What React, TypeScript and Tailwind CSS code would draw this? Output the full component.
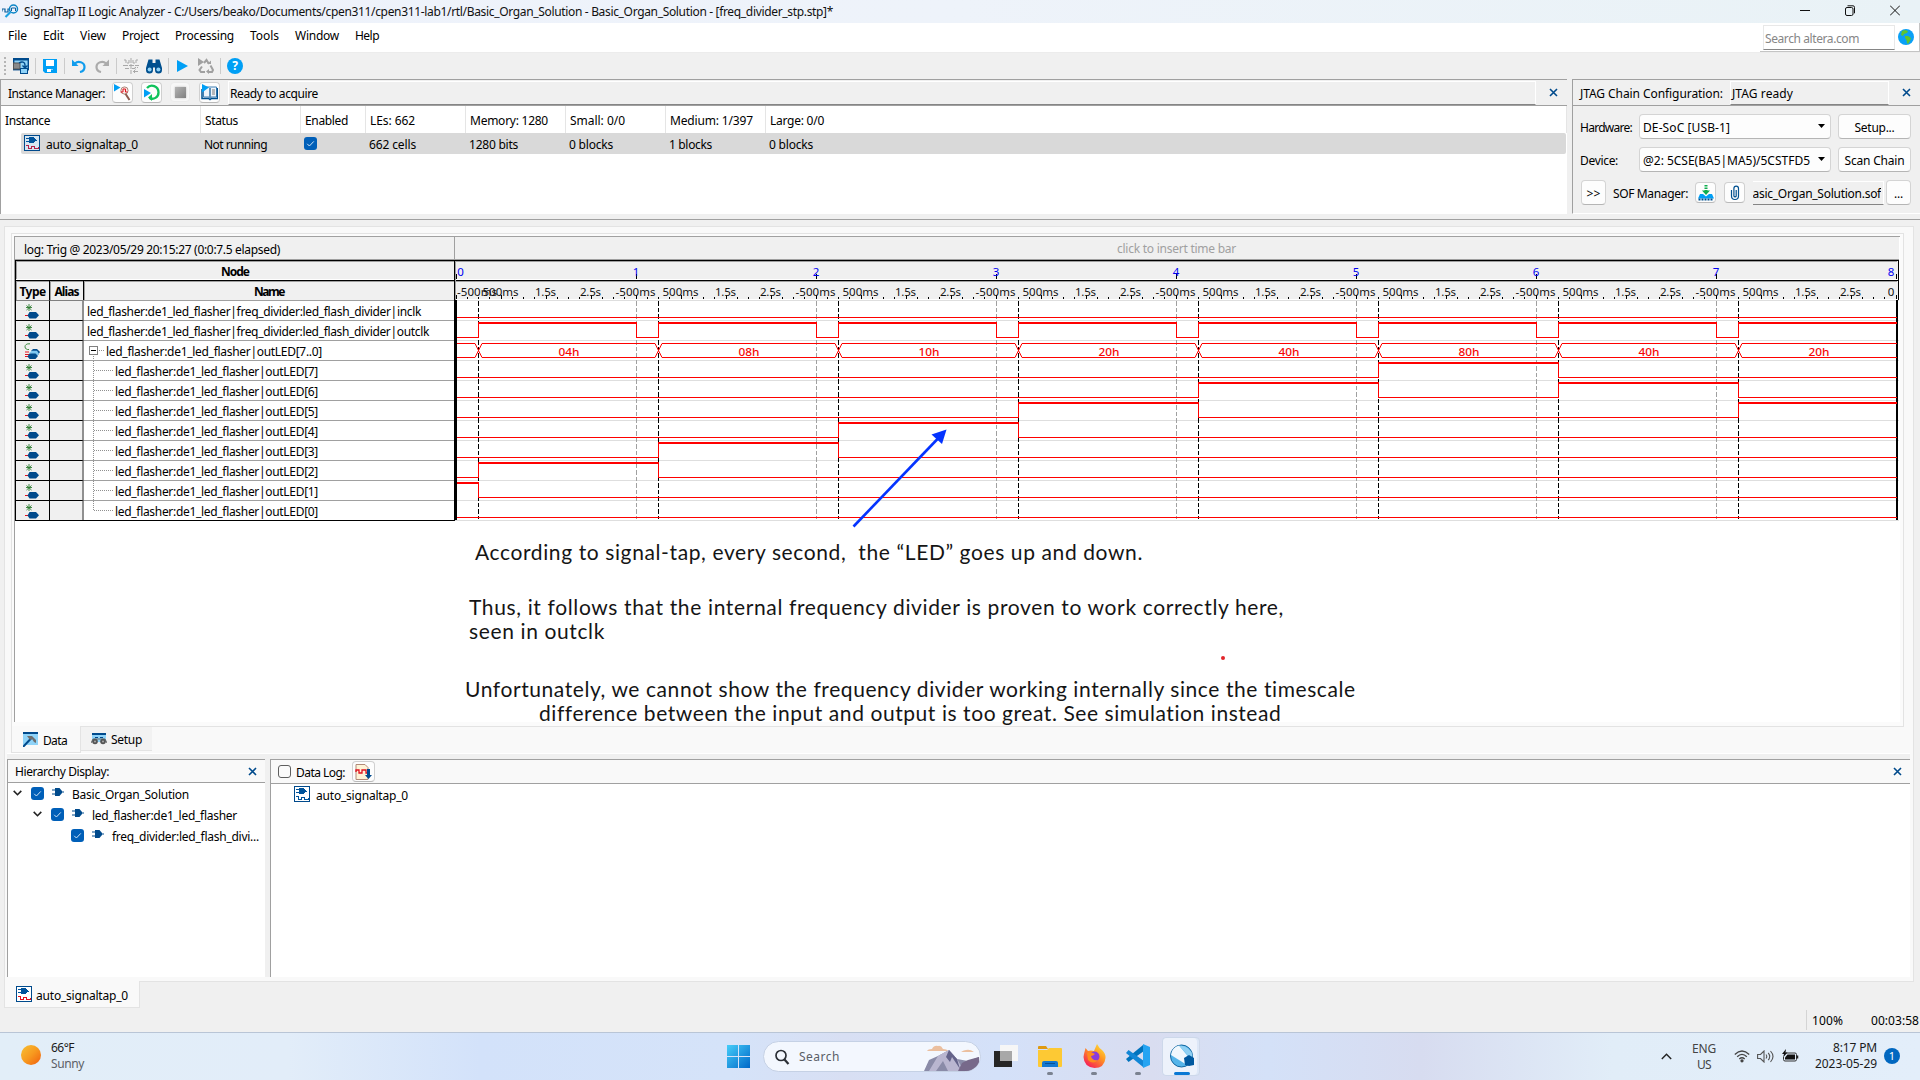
import React, { useLayoutEffect, useRef } from "react";

/* One line of text whose tracking is adjusted so that it spans `w` pixels. */
function T({ w, c = "", children }: { w: number; c?: string; children: string }) {
  const ref = useRef<HTMLSpanElement>(null);
  useLayoutEffect(() => {
    const el = ref.current;
    if (!el) return;
    el.style.letterSpacing = "0px";
    const natural = el.getBoundingClientRect().width;
    const gap = (w - natural) / Math.max(1, children.length);
    el.style.letterSpacing = `${gap}px`;
  }, [w, children]);
  return (
    <span ref={ref} className={`inline-block shrink-0 whitespace-pre ${c}`}>
      {children}
    </span>
  );
}

/* ---------- small icons ---------- */

const CloseX = ({ c = "" }: { c?: string }) => (
  <svg className={`h-[9px] w-[9px] shrink-0 ${c}`} viewBox="0 0 9 9">
    <path d="M1 1L8 8M8 1L1 8" stroke="#004a8c" strokeWidth="1.6" />
  </svg>
);

const Check = ({ c = "" }: { c?: string }) => (
  <span className={`flex h-[13px] w-[13px] shrink-0 items-center justify-center rounded-[3px] bg-[#005fb8] ${c}`}>
    <svg className="h-[9px] w-[9px]" viewBox="0 0 9 9" fill="none">
      <path d="M1.2 4.8L3.4 7L7.8 2.4" stroke="#cfe4f7" strokeWidth="1" />
    </svg>
  </span>
);

const TapIcon = ({ red = "#e1121f", c = "", bg = "#fff" }: { red?: string; c?: string; bg?: string }) => (
  <svg className={`h-4 w-4 shrink-0 ${c}`} viewBox="0 0 16 16" shapeRendering="crispEdges">
    <rect x=".5" y=".5" width="15" height="15" fill={bg} stroke="#004a8c" />
    <path d="M5 2h4l2.500 2v2L9 8H5z" fill="#00539b" />
    <path d="M2 3.500h3M2 6.500h3M11 5.500h2" stroke="#00539b" />
    <path d="M2 10.500h2.500v3h3v-2h3v2h3.500v-2" fill="none" stroke={red} />
  </svg>
);

const Plug = ({ c = "" }: { c?: string }) => (
  <svg className={`h-2 w-3 shrink-0 ${c}`} viewBox="0 0 12 8">
    <path d="M3 0h4.500L10 3v2L7.500 8H3z" fill="#004a8c" />
    <path d="M0 2h3M0 6h3M10 4h2" stroke="#004a8c" strokeWidth="1.200" />
  </svg>
);

const Chevron = ({ c = "" }: { c?: string }) => (
  <svg className={`h-[6px] w-[9px] shrink-0 ${c}`} viewBox="0 0 9 6" fill="none">
    <path d="M.7.9L4.500 4.700L8.300.9" stroke="#222" strokeWidth="1.600" />
  </svg>
);

const NodeIcon = () => (
  <svg className="h-[17px] w-4" viewBox="0 0 16 17">
    <path d="M5 1v7M2.500 2.500l5 4.500M7.500 2.500L2.500 7M2 4.500h6" stroke="#2e7d32" strokeWidth=".9" />
    <path d="M1 12.500h3" stroke="#e1121f" />
    <path d="M5.500 9h6.500l3 3.200l-3 3.300H5.500L3.500 12.500z" fill="#004a8c" />
  </svg>
);

const BusIcon = () => (
  <svg className="h-[17px] w-4" viewBox="0 0 16 17">
    <path d="M6 .8C2.500.5 1 2 1 3.800S3 7 5 6.500" fill="none" stroke="#3c8a40" />
    <path d="M1 9h4M1 11.500h4M1 13.500h4" stroke="#e1121f" />
    <path d="M7 8l2-2h4l3 3-2 3z" fill="#004a8c" />
    <path d="M5 10l3-2.200h5l2 3-2 2z" fill="#7fc8f2" />
    <path d="M5.500 10.500h6l2.500 2.500-2.500 3h-6l-2-2.500z" fill="#004a8c" />
  </svg>
);

const Btn = ({ c = "", children }: { c?: string; children?: React.ReactNode }) => (
  <span className={`flex h-[21px] w-[21px] shrink-0 items-center justify-center rounded-[4px] border border-[#d0d0d0] border-b-[#b9b9b9] bg-[#fdfdfd] ${c}`}>
    {children}
  </span>
);

const Sep = () => <span className="h-4 w-px shrink-0 bg-[#cbcbcb]" />;

/* ---------- title, menu, toolbar ---------- */

function TitleBar() {
  return (
    <div className="flex h-[23px] items-start bg-linear-to-r from-[#eef2fb] via-[#eef3fa] to-[#e9f2f6]">
      <svg className="ml-[2px] mt-[3px] h-4 w-[17px]" viewBox="0 0 17 16" fill="none">
        <path d="M0 8.500V6h3v3h3V6h2" stroke="#0b5f9e" strokeWidth="1.200" />
        <circle cx="11.500" cy="6" r="4" stroke="#0a84c6" strokeWidth="1.500" />
        <path d="M9.500 8V5h4v3" stroke="#0b5f9e" />
        <path d="M8.500 9L3.500 14" stroke="#1ba1e2" strokeWidth="2.200" />
      </svg>
      <T w={809} c="ml-[5px] mt-[3px] text-[#111]">
        SignalTap II Logic Analyzer - C:/Users/beako/Documents/cpen311/cpen311-lab1/rtl/Basic_Organ_Solution - Basic_Organ_Solution - [freq_divider_stp.stp]*
      </T>
      <div className="ml-auto mr-[20px] flex items-center gap-[35px] pt-[5px]">
        <svg className="h-[11px] w-[10px]" viewBox="0 0 10 11"><path d="M0 5.500h10" stroke="#111" /></svg>
        <svg className="h-[11px] w-[10px]" viewBox="0 0 10 11" fill="none" stroke="#111">
          <rect x=".5" y="2.500" width="7.500" height="8" rx="1.500" />
          <path d="M2.500.8h5.500a1.500 1.500 0 0 1 1.500 1.500v6" />
        </svg>
        <svg className="h-[11px] w-[10px]" viewBox="0 0 10 11"><path d="M0 .5l10 10M10 .5l-10 10" stroke="#111" /></svg>
      </div>
    </div>
  );
}

function MenuBar() {
  const items: [string, number][] = [
    ["File", 19], ["Edit", 21], ["View", 26], ["Project", 37], ["Processing", 59], ["Tools", 29], ["Window", 44], ["Help", 24],
  ];
  return (
    <div className="flex h-[30px] border-b border-[#ececec] bg-white">
      <div className="flex gap-4 pl-2 pt-1">
        {items.map(([t, w]) => <T key={t} w={w}>{t}</T>)}
      </div>
      <div className="ml-auto flex h-[29px] w-[160px] border-b border-r border-[#c4c4c4] pl-[3px] pt-[2px]">
        <div className="flex h-[25px] w-[132px] border border-[#e8e8e8] border-b-[#858585] pl-px pt-1 text-[#868686]">
          <T w={94}>Search altera.com</T>
        </div>
        <svg className="ml-[3px] mt-[4px] h-4 w-4" viewBox="0 0 16 16">
          <circle cx="8" cy="8" r="8" fill="#0aa0f5" />
          <path d="M4 2l3-1 3 1-1 2-3 1-1 2-2-1zM7 7l3 0 3 2-1 3-2 3-1-1-.500-3L7 9z" fill="#5fc42e" />
        </svg>
      </div>
    </div>
  );
}

function Toolbar() {
  return (
    <div className="flex h-[26px] items-center bg-[#f0f0f0] pl-1">
      <span className="h-[19px] w-[2px] bg-[repeating-linear-gradient(#b5b5b5_0_2px,transparent_2px_4px)]" />
      <svg className="ml-[7px] mr-[6px] h-4 w-4" viewBox="0 0 16 16">
        <rect x=".7" y=".7" width="14.600" height="11" fill="#8fd3f8" stroke="#004a8c" strokeWidth="1.400" />
        <path d="M0 1.500h16" stroke="#004a8c" strokeWidth="2" />
        <rect x=".5" y="5" width="6.500" height="6" fill="#8a8a8a" stroke="#555" />
        <path d="M6 5c3-2 6-1 6 2v2M9.500 7.500L12 10l2.500-2.500" fill="none" stroke="#004a8c" strokeWidth="1.400" />
        <rect x="7.500" y="10.500" width="7" height="5" fill="#8fd3f8" stroke="#004a8c" />
      </svg>
      <Sep />
      <svg className="ml-[7px] mr-[7px] h-[14px] w-[14px]" viewBox="0 0 14 14">
        <path d="M0 0h14v14H2L0 12z" fill="#009ff5" />
        <path d="M3 1h8v6H3zM4 10h6v3H4z" fill="#fff" />
        <path d="M8 10.500h2V13H8z" fill="#009ff5" />
      </svg>
      <Sep />
      <svg className="ml-[7px] h-[14px] w-[14px]" viewBox="0 0 14 14" fill="none">
        <path d="M3 4.500C6 1.500 12.500 3 12.500 8c0 2.500-2 4.500-4.500 5" stroke="#109ced" strokeWidth="2.200" />
        <path d="M0 .5V7h6.500z" fill="#109ced" />
      </svg>
      <svg className="ml-[9px] mr-[7px] h-[14px] w-[14px]" viewBox="0 0 14 14" fill="none">
        <path d="M11 4.500C8 1.500 1.500 3 1.500 8c0 2.500 2 4.500 4.500 5" stroke="#ababab" strokeWidth="2.200" />
        <path d="M14 .5V7H7.500z" fill="#ababab" />
      </svg>
      <Sep />
      <svg className="ml-[6px] h-4 w-4" viewBox="0 0 16 16" fill="none" stroke="#a9a9a9">
        <path d="M8 0v16M1 2h2v3h3V2M15 2h-2v3h-3V2M0 7.500h16M2 10.500h4M9 10.500h3v-1h3M10 13.500h6M12.500 11.500L10.500 13.500l2 2" strokeDasharray="5 1" />
      </svg>
      <svg className="ml-[7px] mr-[6px] h-4 w-4" viewBox="0 0 16 16">
        <path d="M2.500 1.500h4V5h3V1.500h4L16 10v2a3.500 3.500 0 0 1-7 0V9.500H7V12a3.500 3.500 0 0 1-7 0v-2z" fill="#00508f" />
        <circle cx="3.600" cy="11.500" r="2" fill="#8fd3f8" /><circle cx="12.400" cy="11.500" r="2" fill="#8fd3f8" />
      </svg>
      <Sep />
      <svg className="ml-[8px] h-3 w-[11px]" viewBox="0 0 11 12"><path d="M0 0l11 6L0 12z" fill="#009ff5" /></svg>
      <svg className="ml-[10px] mr-[6px] h-4 w-4" viewBox="0 0 16 16" fill="none" stroke="#a0a0a0" strokeWidth="2">
        <path d="M0 0l6 4-6 4z" fill="#a0a0a0" stroke="none" />
        <path d="M6 5l2.500-3L11 6M12.500 7.500L15 12l-1 2h-4M7 14H3l-1.500-2L4 8.500" />
        <path d="M11 11v5l-3-2.500zM9 6h4V2.500z" fill="#a0a0a0" stroke="none" />
      </svg>
      <Sep />
      <span className="ml-[6px] flex h-4 w-4 items-center justify-center rounded-full bg-[#009ff5] text-[12px] font-bold leading-4 text-white">?</span>
    </div>
  );
}

/* ---------- instance manager ---------- */

const columns: { head: string; hw: number; val: string; vw: number; cell: string }[] = [
  { head: "LEs: 662", hw: 45, val: "662 cells", vw: 47, cell: "w-[100px]" },
  { head: "Memory: 1280", hw: 78, val: "1280 bits", vw: 49, cell: "w-[100px]" },
  { head: "Small: 0/0", hw: 55, val: "0 blocks", vw: 44, cell: "w-[100px]" },
  { head: "Medium: 1/397", hw: 83, val: "1 blocks", vw: 43, cell: "w-[100px]" },
  { head: "Large: 0/0", hw: 54, val: "0 blocks", vw: 44, cell: "w-[801px]" },
];

function InstanceManager() {
  return (
    <section className="flex h-[135px] w-[1567px] flex-col border-l border-t border-[#a0a0a0] bg-white">
      <div className="flex h-[26px] border-b border-[#a0a0a0] bg-[#f0f0f0] pl-[7px]">
        <T w={97} c="mt-[5px]">Instance Manager:</T>
        <Btn c="ml-[7px] mt-[2px]">
          <svg className="h-[17px] w-[17px]" viewBox="0 0 17 17">
            <path d="M11 9l4.500 7" stroke="#8d5a4c" strokeWidth="2" />
            <circle cx="10.500" cy="6.500" r="3.600" fill="#fbe9e4" stroke="#9a6a5c" strokeWidth=".8" />
            <path d="M6.500 8h2.500V5h2.500v3h2" stroke="#e1121f" strokeWidth="1" fill="none" />
            <path d="M0 0l6.500 3.500L0 7.500z" fill="#009ff5" />
          </svg>
        </Btn>
        <Btn c="ml-[8px] mt-[2px]">
          <svg className="h-[17px] w-[17px]" viewBox="0 0 17 17" fill="none">
            <path d="M4 4C8-.5 15.500 2 15.500 8.500c0 5-5 7.500-9 5.500" stroke="#0fc25c" strokeWidth="2.300" />
            <path d="M9 10v7l-4-3.500z" fill="#0fc25c" />
            <path d="M1 5l7 4-7 4.500z" fill="#009ff5" />
          </svg>
        </Btn>
        <span className="ml-[8px] mt-[2px] flex h-[20px] w-[20px] items-center justify-center rounded-[4px] border border-[#ebebeb] bg-[#f7f7f7]">
          <span className="h-[11px] w-[11px] bg-linear-to-br from-[#b4b4b4] to-[#808080] shadow-[0_0_2px_#bbb]" />
        </span>
        <Btn c="ml-[9px] mt-[2px]">
          <svg className="h-[17px] w-[17px]" viewBox="0 0 17 17">
            <path d="M2.500 3h13v10H10l-1 1.500L8 13H2.500z" fill="#eef4fa" stroke="#3f7fb3" />
            <path d="M9 4v9" stroke="#00508f" strokeWidth="1.200" />
            <path d="M11 6h3M11 8h3M11 10h3" stroke="#6e6e6e" strokeWidth=".9" />
            <path d="M1 5v9.500h6.500l1.500 1 1.500-1H16.500V4" fill="none" stroke="#00508f" strokeWidth="1.500" />
            <path d="M1 0l7 3.500L1 8.500z" fill="#009ff5" />
          </svg>
        </Btn>
        <div className="ml-[8px] mt-px flex h-[24px] w-[1308px] border border-white border-b-[#858585] bg-[#f0f0f0] pl-px pt-[3px]">
          <T w={88}>Ready to acquire</T>
        </div>
        <CloseX c="ml-[13px] mt-[8px]" />
      </div>
      <div className="flex h-[27px]">
        <div className="w-[200px] border-r border-[#e5e5e5] pl-1 pt-[6px]"><T w={45}>Instance</T></div>
        <div className="w-[100px] border-r border-[#e5e5e5] pl-1 pt-[6px]"><T w={33}>Status</T></div>
        <div className="w-[65px] border-r border-[#e5e5e5] pl-1 pt-[6px]"><T w={43}>Enabled</T></div>
        {columns.map((k) => (
          <div key={k.head} className={`border-r border-[#e5e5e5] pl-1 pt-[6px] ${k.cell}`}><T w={k.hw}>{k.head}</T></div>
        ))}
      </div>
      <div className="ml-5 flex h-[21px] w-[1545px] rounded-[2px] bg-[#d9d9d9]">
        <div className="flex w-[179px] pl-[3px] pt-[2px]">
          <TapIcon red="#b3224a" bg="#d6e6f2" />
          <T w={92} c="ml-[6px] mt-px">auto_signaltap_0</T>
        </div>
        <div className="w-[100px] pl-1 pt-[3px]"><T w={63}>Not running</T></div>
        <div className="w-[65px] pl-1 pt-[4px]"><Check /></div>
        {columns.map((k) => (
          <div key={k.head} className="w-[100px] pl-1 pt-[3px]"><T w={k.vw}>{k.val}</T></div>
        ))}
      </div>
    </section>
  );
}

/* ---------- JTAG panel ---------- */

const Select = ({ w, children }: { w: number; children: string }) => (
  <div className="flex h-[25px] w-[192px] rounded-[4px] border border-[#d4d4d4] border-b-[#b5b5b5] bg-[#fdfdfd] pl-[3px] pt-1">
    <T w={w}>{children}</T>
    <svg className="ml-auto mr-[5px] mt-[5px] h-1 w-[7px]" viewBox="0 0 7 4"><path d="M0 0h7L3.500 4z" fill="#000" /></svg>
  </div>
);

const Push = ({ w, c, children }: { w: number; c: string; children: string }) => (
  <div className={`flex h-[25px] justify-center rounded-[4px] border border-[#d4d4d4] border-b-[#b5b5b5] bg-[#fdfdfd] pt-1 ${c}`}>
    <T w={w}>{children}</T>
  </div>
);

function JtagPanel() {
  return (
    <section className="ml-[5px] flex h-[135px] w-[348px] flex-col border-b border-l border-t border-[#a0a0a0] border-b-white bg-[#f0f0f0]">
      <div className="flex h-[26px] shrink-0 border-b border-[#a0a0a0] pl-[7px]">
        <T w={143} c="mt-[5px]">JTAG Chain Configuration:</T>
        <div className="ml-[7px] mt-px flex h-[24px] w-[159px] border border-white border-b-[#858585] pl-px pt-[3px]">
          <T w={61}>JTAG ready</T>
        </div>
        <CloseX c="ml-[13px] mt-[8px]" />
      </div>
      <div className="mt-[8px] flex pl-[7px]">
        <div className="w-[59px] pt-[5px]"><T w={52}>Hardware:</T></div>
        <Select w={87}>DE-SoC [USB-1]</Select>
        <Push c="ml-[7px] w-[73px]" w={40}>Setup...</Push>
      </div>
      <div className="mt-[8px] flex pl-[7px]">
        <div className="w-[59px] pt-[5px]"><T w={38}>Device:</T></div>
        <Select w={167}>@2: 5CSE(BA5|MA5)/5CSTFD5</Select>
        <Push c="ml-[7px] w-[73px]" w={60}>Scan Chain</Push>
      </div>
      <div className="mt-[8px] flex pl-[8px]">
        <Push c="w-[25px]" w={14}>{">>"}</Push>
        <T w={75} c="ml-[7px] mt-[5px]">SOF Manager:</T>
        <Btn c="ml-[7px] mt-[2px]">
          <svg className="h-4 w-4" viewBox="0 0 16 16">
            <path d="M8 0v7" stroke="#0fae4e" strokeWidth="3" strokeDasharray="1.500 1" />
            <path d="M4 5.500h8L8 10z" fill="#0fae4e" />
            <path d="M2 9h3l3 2.500L11 9h3l2 4.500H0z" fill="#009ff5" />
            <path d="M.5 14.500h15" stroke="#00508f" strokeWidth="2" strokeDasharray="2 1" />
          </svg>
        </Btn>
        <Btn c="ml-[8px] mt-[2px]">
          <svg className="h-4 w-4" viewBox="0 0 16 16" fill="none" stroke="#00508f" strokeWidth="1.200">
            <path d="M4.500 5v6a3.500 3.500 0 0 0 7 0V3.500a2.300 2.300 0 0 0-4.600 0V11a1.200 1.200 0 0 0 2.300 0V5" />
          </svg>
        </Btn>
        <div className="ml-[8px] mt-px flex h-[24px] w-[131px] overflow-hidden border border-l-0 border-white border-b-[#858585] pt-[3px]">
          <div className="flex w-[128px] justify-end overflow-hidden"><T w={136}>Basic_Organ_Solution.sof</T></div>
        </div>
        <Push c="ml-[2px] w-[25px]" w={9}>...</Push>
      </div>
    </section>
  );
}

/* ---------- waveform data ---------- */

const X0 = 457;
const X1 = 1897;
const edges = [478, 658, 838, 1018, 1198, 1378, 1558, 1738];

/* Each signal lists the spans in which it is high. */
const signals: { row: number; high: [number, number][] }[] = [
  { row: 0, high: [] },
  { row: 1, high: edges.map((e, i) => [e, i === 7 ? X1 : e + 158] as [number, number]) },
  { row: 3, high: [[1378, 1558]] },
  { row: 4, high: [[1198, 1378], [1558, 1738]] },
  { row: 5, high: [[1018, 1198], [1738, X1]] },
  { row: 6, high: [[838, 1018]] },
  { row: 7, high: [[658, 838]] },
  { row: 8, high: [[478, 658]] },
  { row: 9, high: [[X0, 478]] },
  { row: 10, high: [] },
];

const busLabels: [string, number][] = [
  ["04h", 569], ["08h", 749], ["10h", 929], ["20h", 1109], ["40h", 1289], ["80h", 1469], ["40h", 1649], ["20h", 1819],
];

function Signal({ row, high }: { row: number; high: [number, number][] }) {
  const top = 302 + row * 20;
  const low = 317 + row * 20;
  const lows: [number, number][] = [];
  let x = X0;
  high.forEach(([a, b]) => {
    if (a > x) lows.push([x, a]);
    x = b;
  });
  if (x < X1) lows.push([x, X1]);
  return (
    <g fill="#f00">
      {lows.map(([a, b]) => <rect key={a} x={a} y={low} width={b - a} height="1" />)}
      {high.map(([a, b]) => (
        <g key={a}>
          <rect x={a} y={top} width={b - a} height="2" />
          {a > X0 && <rect x={a} y={top} width="1" height="16" />}
          {b < X1 && <rect x={b} y={top} width="1" height="16" />}
        </g>
      ))}
    </g>
  );
}

function Waveform() {
  const minor = Array.from({ length: 129 }, (_, i) => ({ i, x: Math.floor(456 + i * 11.25) }));
  const times: [string, number, number][] = [];
  for (let k = 0; k < 8; k++) {
    const b = 456 + k * 180;
    times.push(["500ms", b + 45, 36], ["1.5s", b + 90, 21], ["2.5s", b + 135, 21]);
    if (k > 0) times.push(["-500ms", b, 40]);
  }
  return (
    <svg className="h-[261px] w-[1444px] shrink-0" viewBox="455 260 1444 261" shapeRendering="crispEdges">
      <rect x="455" y="260" width="1443" height="40" fill="#f0f0f0" />
      <path d="M454 260.500h1444.500v40M454 280.500h1444" stroke="#000" fill="none" />
      <path d="M456 261.500h1441M456 281.500h1441" stroke="#a0a0a0" />
      <path d="M455 279.500h1443M455 299.500h1443" stroke="#fff" />
      <rect x="455" y="261" width="1" height="39" fill="#a0a0a0" />
      {Array.from({ length: 12 }, (_, i) => (
        <rect key={i} x="455" y={300 + i * 20} width="1444" height="1" fill="#dedede" />
      ))}
      <rect x="455" y="300" width="2" height="220" fill="#000" />
      <rect x="1896" y="300" width="2" height="220" fill="#000" />
      {edges.slice(0, 7).map((e) => (
        <path key={e} d={`M${e + 158.5} 301V519`} stroke="#a0a0a0" strokeDasharray="4.500 2" />
      ))}
      {edges.map((e) => (
        <path key={e} d={`M${e + 0.5} 301V519`} stroke="#000" strokeDasharray="4.500 2" />
      ))}
      {signals.map((s) => <Signal key={s.row} {...s} />)}
      {[X0 - 3, ...edges].map((e, i) => (
        <path
          key={e}
          d={`M${i ? e + 4 : X0} 343.500H${i === 8 ? X1 : (edges[i] ?? X1) - 3}M${i ? e + 4 : X0} 357.500H${i === 8 ? X1 : (edges[i] ?? X1) - 3}`}
          stroke="#f00"
        />
      ))}
      {edges.map((e) => (
        <path key={e} shapeRendering="auto" d={`M${e - 3} 343.500L${e + 4} 357.500M${e + 4} 343.500L${e - 3} 357.500`} stroke="#f00" />
      ))}
      {minor.map(({ i, x }) => (
        <rect key={i} x={x} y={i % 4 === 0 ? 295 : 297} width="1" height={i % 4 === 0 ? 4 : 2} fill="#000" />
      ))}
      {Array.from({ length: 9 }, (_, i) => (
        <rect key={i} x={456 + i * 180} y="274" width="1" height="5" fill="#000" />
      ))}
      <g fontSize="11.500" textAnchor="middle" fill="#0000f0">
        {[1, 2, 3, 4, 5, 6, 7].map((n) => <text key={n} x={456 + n * 180} y="275.500">{n}</text>)}
        <text x="460.500" y="275.500">0</text>
        <text x="1891" y="275.500">8</text>
      </g>
      <g fontSize="11.500" textAnchor="middle" fill="#111">
        {times.map(([t, x, w]) => <text key={t + x} x={x - 0.5} y="295.500" textLength={w}>{t}</text>)}
        <text x="477" y="295.500" textLength="40">-500ms</text>
        <text x="1891" y="295.500">0</text>
      </g>
      <g fontSize="10.500" fontWeight="500" textAnchor="middle" fill="#f40808">
        {busLabels.map(([t, x]) => <text key={x} x={x} y="356" textLength="21" lengthAdjust="spacingAndGlyphs">{t}</text>)}
      </g>
    </svg>
  );
}

/* ---------- node table ---------- */

const P = "led_flasher:de1_led_flasher|";
const nodes: { text: string; w: number; kind: "leaf" | "bus" | "child" }[] = [
  { text: P + "freq_divider:led_flash_divider|inclk", w: 334, kind: "leaf" },
  { text: P + "freq_divider:led_flash_divider|outclk", w: 342, kind: "leaf" },
  { text: P + "outLED[7..0]", w: 216, kind: "bus" },
  ...[7, 6, 5, 4, 3, 2, 1, 0].map((n) => ({ text: `${P}outLED[${n}]`, w: 203, kind: "child" as const })),
];

function NodeTable() {
  return (
    <div className="flex w-[440px] shrink-0 flex-col border-l border-r border-black">
      <div className="flex h-5 justify-center border-b border-t border-b-white border-t-black bg-[#f0f0f0] font-bold shadow-[inset_1px_1px_0_#a0a0a0]">
        <T w={28} c="mt-[2px]">Node</T>
      </div>
      <div className="flex h-5 border-t border-black bg-[#f0f0f0] font-bold">
        <div className="flex w-[34px] justify-center border-r border-black shadow-[inset_1px_1px_0_#a0a0a0]"><T w={26} c="mt-[2px]">Type</T></div>
        <div className="flex w-[34px] justify-center border-r border-black shadow-[inset_1px_1px_0_#a0a0a0]"><T w={24} c="mt-[2px]">Alias</T></div>
        <div className="flex flex-1 justify-center shadow-[inset_1px_1px_0_#a0a0a0]"><T w={30} c="mt-[2px]">Name</T></div>
      </div>
      {nodes.map((n, i) => (
        <div key={n.text} className="flex h-5">
          <div className={`h-5 w-[34px] border-r border-t border-r-black bg-[#f0f0f0] pl-[8px] pt-[2px] ${i ? "border-t-black" : "border-t-[#808080]"}`}>
            {n.kind === "bus" ? <BusIcon /> : <NodeIcon />}
          </div>
          <div className={`h-5 w-[34px] border-r-2 border-t border-r-[#909090] bg-[#f0f0f0] ${i ? "border-t-black" : "border-t-[#808080]"}`} />
          <div className="flex h-5 flex-1 border-t border-[#a0a0a0] bg-white">
            {n.kind === "leaf" && <T w={n.w} c="ml-[3px] mt-[2px]">{n.text}</T>}
            {n.kind === "bus" && (
              <>
                <svg className="ml-[5px] mt-[5px] h-[14px] w-[17px] shrink-0" viewBox="0 0 17 14" shapeRendering="crispEdges" fill="none">
                  <rect x=".5" y=".5" width="8" height="8" stroke="#808080" />
                  <path d="M2 4.500h5" stroke="#000" />
                  <path d="M10 4.500h5M4.500 10v4" stroke="#909090" strokeDasharray="1 1" />
                </svg>
                <T w={n.w} c="mt-[2px]">{n.text}</T>
              </>
            )}
            {n.kind === "child" && (
              <>
                <svg className="ml-[9px] h-[19px] w-[22px] shrink-0" viewBox="0 0 22 19" shapeRendering="crispEdges" fill="none">
                  <path d={i === 10 ? "M.5 0v10M1 9.500h20" : "M.5 0v19M1 9.500h20"} stroke="#909090" strokeDasharray="1 1" />
                </svg>
                <T w={n.w} c="mt-[2px]">{n.text}</T>
              </>
            )}
          </div>
        </div>
      ))}
      <div className="h-px bg-black" />
    </div>
  );
}

function Notes() {
  return (
    <div className="flex flex-col items-start font-['Lato','Noto_Sans',sans-serif] text-[21px] leading-6 text-[#151515]">
      <T w={668} c="ml-[460px] mt-[19px]">According to signal-tap, every second,  the “LED” goes up and down.</T>
      <T w={815} c="ml-[454px] mt-[31px]">Thus, it follows that the internal frequency divider is proven to work correctly here,</T>
      <T w={136} c="ml-[454px]">seen in outclk</T>
      <T w={891} c="ml-[450px] mt-[34px]">Unfortunately, we cannot show the frequency divider working internally since the timescale</T>
      <T w={742} c="ml-[524px]">difference between the input and output is too great. See simulation instead</T>
    </div>
  );
}

/* ---------- lower docks ---------- */

function TreeRow({ c, w, leaf, children }: { c: string; w: number; leaf?: boolean; children: string }) {
  return (
    <div className={`flex h-[21px] ${c}`}>
      {leaf ? <span className="w-[9px]" /> : <Chevron c="mt-[7px]" />}
      <Check c="ml-[9px] mt-[4px]" />
      <Plug c="ml-[8px] mt-[5px]" />
      <T w={w} c="ml-[8px] mt-[3px]">{children}</T>
    </div>
  );
}

function LowerDocks() {
  return (
    <div className="ml-[2px] flex h-[224px] w-[1903px] border-t border-white bg-[#f0f0f0] pt-[5px]">
      <section className="w-[258px] border-l border-t border-[#a0a0a0] bg-white">
        <div className="flex h-[23px] border-b border-[#a0a0a0] bg-[#f9f9f9] pl-[7px] pt-[3px]">
          <T w={94}>Hierarchy Display:</T>
          <CloseX c="ml-auto mr-[8px] mt-[4px]" />
        </div>
        <TreeRow c="pl-[5px]" w={117}>Basic_Organ_Solution</TreeRow>
        <TreeRow c="pl-[25px]" w={145}>led_flasher:de1_led_flasher</TreeRow>
        <TreeRow c="pl-[45px]" w={147} leaf>freq_divider:led_flash_divi...</TreeRow>
      </section>
      <section className="ml-[5px] w-[1640px] border-l border-t border-[#a0a0a0] bg-white">
        <div className="flex h-[24px] border-b border-[#a0a0a0] bg-[#f9f9f9] pl-[7px]">
          <span className="mt-[5px] h-[13px] w-[13px] rounded-[3px] border border-[#5e5e5e] bg-[#fafafa]" />
          <T w={49} c="ml-[5px] mt-[4px]">Data Log:</T>
          <Btn c="ml-[7px] mt-px w-[23px]">
            <svg className="h-4 w-[17px]" viewBox="0 0 17 16" fill="none">
              <path d="M1 .5h9l3 3v12H1z" fill="#fff3d6" stroke="#b08a78" />
              <path d="M1 8V6h3v3h3V6h4v3h2" stroke="#e1121f" strokeWidth="1.300" />
              <path d="M12 5h3v6h2l-3.500 4L10 11h2z" fill="#004a8c" />
            </svg>
          </Btn>
          <CloseX c="ml-auto mr-[8px] mt-[7px]" />
        </div>
        <div className="flex pl-[23px] pt-[2px]">
          <TapIcon red="#00539b" />
          <T w={92} c="ml-[6px] mt-px">auto_signaltap_0</T>
        </div>
      </section>
    </div>
  );
}

function Workspace() {
  return (
    <div className="h-[763px] border-t border-[#a0a0a0] bg-[#f0f0f0] pl-1 pt-[6px]">
      <div className="flex h-[756px] w-[1910px] flex-col border border-[#e3e3e3] bg-[#f9f9f9]">
        <div className="ml-[6px] mt-[6px] h-[494px] w-[1893px] shrink-0 border border-[#e3e3e3] bg-[#fbfbfb] pl-[2px] pt-[2px]">
          <div className="relative h-[486px] w-[1886px] border-l border-t border-[#a0a0a0] bg-white">
            <div className="flex h-[23px] w-[1884px] border-b border-[#a0a0a0] bg-[#f0f0f0]">
              <div className="w-[440px] border-r border-[#a0a0a0] pl-[9px] pt-[4px]">
                <T w={256}>log: Trig @ 2023/05/29 20:15:27 (0:0:7.5 elapsed)</T>
              </div>
              <T w={119} c="ml-[662px] mt-[3px] text-[#a0a0a0]">click to insert time bar</T>
            </div>
            <div className="flex h-[261px]">
              <NodeTable />
              <Waveform />
            </div>
            <Notes />
            <svg className="absolute left-[825px] top-[184px] h-[115px] w-[120px]" viewBox="840.500 421 120 115">
              <path d="M854 526.500L938 439" stroke="#0433ff" strokeWidth="2.600" />
              <path d="M947 429.500L932 434.500L942.500 444z" fill="#0433ff" />
            </svg>
            <span className="absolute left-[1206px] top-[419px] h-1 w-1 rounded-full bg-[#e2252b]" />
          </div>
        </div>
        <div className="ml-[6px] flex h-[26px] shrink-0">
          <div className="relative -mt-[1px] flex h-[27px] w-[70px] border border-t-0 border-[#e3e3e3] bg-[#f9f9f9] pl-[11px] pt-[6px]">
            <svg className="h-[15px] w-[15px]" viewBox="0 0 15 15">
              <rect width="15" height="13" fill="#8fd3f8" /><rect width="15" height="2" fill="#004a8c" />
              <path d="M0 15L8 6.500" stroke="#004a8c" strokeWidth="2" />
              <path d="M4 4h5l4 4v3l-2-1-2-3-2 1z" fill="#6e6e6e" />
            </svg>
            <T w={24} c="ml-[5px]">Data</T>
          </div>
          <div className="flex h-[24px] w-[71px] border-b border-[#e3e3e3] bg-[#f2f2f2] pl-[10px] pt-[4px]">
            <svg className="mt-[2px] h-3 w-4" viewBox="0 0 16 12">
              <rect x="1" width="14" height="9" fill="#8fd3f8" /><rect x="1" width="14" height="2" fill="#004a8c" />
              <path d="M4 4.500h3M9 4.500h3" stroke="#004a8c" />
              <path d="M0 10l2-4h12l2 4" fill="none" stroke="#666" />
              <circle cx="4" cy="8.500" r="2.800" fill="#555" /><circle cx="12" cy="8.500" r="2.800" fill="#555" />
              <circle cx="4" cy="8.500" r="1" fill="#aaa" /><circle cx="12" cy="8.500" r="1" fill="#aaa" />
            </svg>
            <T w={31} c="ml-[4px]">Setup</T>
          </div>
        </div>
        <LowerDocks />
      </div>
    </div>
  );
}

function BottomStrip() {
  return (
    <div className="flex h-[50px] bg-[#f0f0f0] pl-1">
      <div className="relative -mt-[1px] flex h-[27px] w-[136px] border border-t-0 border-[#e3e3e3] bg-[#f9f9f9] pl-[11px] pt-[5px]">
        <TapIcon />
        <T w={92} c="ml-[4px] mt-px">auto_signaltap_0</T>
      </div>
      <div className="ml-auto mr-px mt-[28px] flex h-[20px] border-l border-[#d4d4d4] pl-[5px] pt-[2px]">
        <T w={31}>100%</T>
        <T w={48} c="ml-[28px]">00:03:58</T>
      </div>
    </div>
  );
}

/* ---------- taskbar ---------- */

function Taskbar() {
  return (
    <div className="flex h-12 border-t border-[#b9c5d6] bg-[linear-gradient(90deg,#e2eef8_0%,#e2edf9_15%,#d3e2fa_25%,#d5e3f9_38%,#d8dff3_44%,#d4e1f9_52%,#d9ddf0_60%,#d4e1f8_66%,#d7dcf0_74%,#e1edf8_84%,#e3eefa_100%)] leading-4">
      <div className="flex w-[727px] pl-[21px]">
        <span className="mt-[12px] h-5 w-5 rounded-full bg-linear-to-br from-[#f6c133] via-[#f79a1f] to-[#ef5a0c]" />
        <div className="ml-[10px] mt-[7px] flex flex-col items-start">
          <T w={23} c="text-[#1b1b1b]">66°F</T>
          <T w={33} c="text-[#5c6066]">Sunny</T>
        </div>
      </div>
      <svg className="mt-[12px] h-[23px] w-[23px] shrink-0" viewBox="0 0 23 23">
        <defs><linearGradient id="win" x1="0" y1="0" x2="1" y2="1"><stop stopColor="#45cdf9" /><stop offset="1" stopColor="#0067c8" /></linearGradient></defs>
        <path d="M0 0h11v11H0zM12 0h11v11H12zM0 12h11v11H0zM12 12h11v11H12z" fill="url(#win)" />
      </svg>
      <div className="ml-[13px] mt-[8px] flex h-[31px] w-[218px] overflow-hidden rounded-full border border-[#c5d1e5] bg-[#f3f7fe] pl-[10px]">
        <svg className="mt-[7px] h-4 w-4" viewBox="0 0 16 16" fill="none" stroke="#2b2f36" strokeWidth="1.700">
          <circle cx="7" cy="6.500" r="5" /><path d="M10.500 10.500l4 4.500" strokeWidth="2.200" />
        </svg>
        <T w={41} c="ml-[9px] mt-[7px] text-[#5a5e66]">Search</T>
        <svg className="ml-auto mr-[1px] mt-[3px] h-[26px] w-[55px]" viewBox="0 0 55 26">
          <path d="M3 6q1-2 5-2q2-4 6-3q3-1 5 3q4 0 5 2zM37 7q3-2 5-2q4-1 8 2z" fill="#ebbf9f" />
          <path d="M0 26L5 15L14 11L25 5L33 14L44 16L55 12V26z" fill="#8a8ba8" />
          <path d="M14 11L25 5L33 14L40 26H24L19 16L12 26H5z" fill="#b9b6d0" />
          <path d="M25 5L22 12L26 17L28 12L36 24L33 14z" fill="#64638a" />
          <path d="M38 18L44 15L55 12V22L45 26H34z" fill="#77698a" />
        </svg>
      </div>
      <svg className="ml-[13px] mt-[12px] h-[23px] w-6 shrink-0" viewBox="0 0 24 23">
        <rect x="6" width="18" height="16" fill="#f6f6f6" /><rect y="6" width="18" height="16" fill="#262626" />
        <rect x="6" y="6" width="12" height="10" fill="#a8a8a8" />
      </svg>
      <div className="ml-5 mt-[13px] flex w-6 shrink-0 flex-col items-center">
        <svg className="h-[22px] w-6" viewBox="0 0 24 22">
          <path d="M0 1q0-1 1-1h7l2 3H0z" fill="#e09a10" /><path d="M0 4h9l2-2h12q1 0 1 1v17q0 1-1 1H1q-1 0-1-1z" fill="#fdc934" />
          <path d="M4 21v-4q0-2 2-2h12q2 0 2 2v4z" fill="#1277cf" /><path d="M7 17.500h10" stroke="#0a4f93" />
        </svg>
        <span className="mt-[4px] h-[3px] w-[6px] rounded-full bg-[#7b8290]" />
      </div>
      <div className="ml-5 mt-[11px] flex w-6 shrink-0 flex-col items-center">
        <svg className="h-6 w-[23px]" viewBox="0 0 23 24">
          <defs>
            <linearGradient id="ff" x1="0.900" y1="0" x2="0.200" y2="1"><stop stopColor="#ffe83c" /><stop offset=".45" stopColor="#ff9422" /><stop offset="1" stopColor="#f5155c" /></linearGradient>
          </defs>
          <path d="M1 10L2.500 4L5 7q3-1 6 0L14 0q2 4 5 6q4 4 3.500 8Q21.500 24 11.500 24Q1 23 .5 13z" fill="url(#ff)" />
          <circle cx="11.500" cy="12.500" r="5" fill="#8a3bdc" />
          <path d="M4 9q4-2 8 1q-2 2-4 2q1 5 7 4q-5 5-10 0z" fill="#ff8a1e" />
        </svg>
        <span className="mt-[4px] h-[3px] w-[6px] rounded-full bg-[#7b8290]" />
      </div>
      <div className="ml-5 mt-[11px] flex w-6 shrink-0 flex-col items-center">
        <svg className="h-6 w-6" viewBox="0 0 24 24">
          <path d="M17 1L0 15l2.500 3L18 7z" fill="#0073bd" /><path d="M17 23L0 9l2.500-3L18 17z" fill="#1186d6" />
          <path d="M17 0l7 3v18l-7 3z" fill="#25a4f2" />
        </svg>
        <span className="mt-[4px] h-[3px] w-[6px] rounded-full bg-[#7b8290]" />
      </div>
      <div className="ml-[12px] mt-[4px] flex h-[39px] w-[38px] shrink-0 rounded-[4px] border border-[#cdd8ea] bg-[#dde7f7]">
        <div className="flex h-[37px] w-[34px] flex-col items-center rounded-[4px] bg-[#edf2fb] pl-[3px] pt-[6px]">
          <svg className="h-6 w-6" viewBox="0 0 24 24">
            <circle cx="11.500" cy="12" r="11" fill="#55b5ea" stroke="#12669f" />
            <path d="M1 11Q2 3 9 1.500L21 16l-4 5z" fill="#f1f8fd" />
            <path d="M9 1.500Q21 2 22.500 12L21 15z" fill="#8fd0f3" />
            <path d="M14 14l5-3 5 3v7l-5 1-4-1z" fill="#00599f" />
          </svg>
          <span className="mt-[4px] h-[3px] w-4 shrink-0 rounded-full bg-[#0a78d4]" />
        </div>
      </div>
      <div className="ml-auto flex text-[#1b1b1b]">
        <svg className="mt-[20px] h-[7px] w-[11px]" viewBox="0 0 11 7" fill="none"><path d="M.8 6L5.500 1.300L10.200 6" stroke="#222" strokeWidth="1.400" /></svg>
        <div className="ml-5 mt-[8px] flex w-[24px] flex-col items-center text-[#444]">
          <T w={24}>ENG</T>
          <T w={14}>US</T>
        </div>
        <svg className="ml-[18px] mt-[16px] h-[14px] w-4" viewBox="0 0 16 14" fill="none" stroke="#444" strokeWidth="1.300">
          <path d="M.8 5.500Q8-1.500 15.200 5.500M3.200 7.800Q8 3 12.800 7.800M5.300 10Q8 7.500 10.700 10" /><circle cx="8" cy="11.800" r="1" fill="#333" />
        </svg>
        <svg className="ml-[7px] mt-[17px] h-[13px] w-[17px]" viewBox="0 0 17 13" fill="none" stroke="#555" strokeWidth="1.100">
          <path d="M.6 4.500H3.500L7 1v11L3.500 8.500H.6z" /><path d="M9 4.500q1.500 2 0 4M11.200 2.800q3 3.700 0 7.400M13.500 1q5 5.500 0 11" />
        </svg>
        <svg className="ml-[8px] mt-[16px] h-[14px] w-[17px]" viewBox="0 0 17 14">
          <path d="M4 4h9a1.500 1.500 0 0 1 1.500 1.500v5A1.500 1.500 0 0 1 13 12H3a1.500 1.500 0 0 1-1.500-1.500V8" fill="none" stroke="#333" /><path d="M5.500 5.500H13v5H3V8.500z" fill="#111" />
          <path d="M15.500 6.500v3" stroke="#222" strokeWidth="1.500" /><path d="M4 0L0 5h2L1 8.500L5.500 3.500H3.500z" fill="#111" />
        </svg>
        <div className="ml-[16px] mt-[7px] flex w-[62px] flex-col items-end">
          <T w={44}>8:17 PM</T>
          <T w={62}>2023-05-29</T>
        </div>
        <span className="ml-[7px] mr-[20px] mt-[15px] h-4 w-4 rounded-full bg-[#0067c0] text-center text-[11px] leading-4 text-white">1</span>
      </div>
    </div>
  );
}

export default function App() {
  return (
    <div className="flex h-[1080px] w-[1920px] flex-col overflow-hidden bg-[#f0f0f0] font-['Noto_Sans','Open_Sans',sans-serif] text-[12px] leading-[18px] text-black">
      <TitleBar />
      <MenuBar />
      <Toolbar />
      <div className="flex h-[140px]">
        <InstanceManager />
        <JtagPanel />
      </div>
      <Workspace />
      <BottomStrip />
      <Taskbar />
    </div>
  );
}
